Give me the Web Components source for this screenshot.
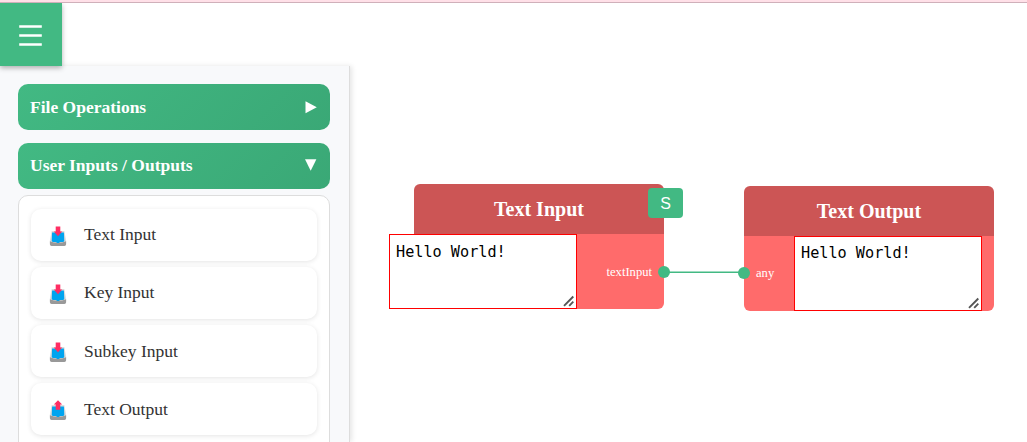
<!DOCTYPE html>
<html lang="en">
<head>
<meta charset="utf-8">
<title>Flow editor</title>
<style>
html,body{margin:0;height:100%;overflow:hidden;background:#fff;font-family:"Liberation Serif",serif}
</style>
</head>
<body>
<flow-app>
  <flow-sidebar slot="side">
    <flow-category label="File Operations"></flow-category>
    <flow-category label="User Inputs / Outputs" open>
      <flow-item dir="in">Text Input</flow-item>
      <flow-item dir="in">Key Input</flow-item>
      <flow-item dir="in">Subkey Input</flow-item>
      <flow-item dir="out">Text Output</flow-item>
    </flow-category>
  </flow-sidebar>
  <flow-link style="left:664px;top:266px"></flow-link>
  <flow-node label="Text Input" port="textInput" kind="source" style="left:414px;top:184px">Hello World!</flow-node>
  <flow-node label="Text Output" port="any" kind="sink" style="left:744px;top:186px">Hello World!</flow-node>
</flow-app>
<script>
const define = (name, render) => customElements.define(name, class extends HTMLElement {
  constructor() { super(); this.attachShadow({mode: 'open'}); }
  connectedCallback() { this.shadowRoot.innerHTML = render(this); }
});

define('flow-app', () => `<style>
:host{display:flex;flex-direction:column;height:442px;width:1027px;overflow:hidden}
.strip{height:2px;flex:none;background:#ffe0e8;border-bottom:1px solid #d0b0ba;position:relative;z-index:4}
.main{flex:1;min-height:0;display:flex;flex-direction:column}
</style><div class="strip"></div><div class="main"><menu-button></menu-button><slot name="side"></slot></div><slot></slot>`);

define('menu-button', () => `<style>
:host{display:flex;flex:none;box-sizing:border-box;width:62px;height:63px;padding:22px 0 0 19px;background:#42b983;box-shadow:0 2px 5px rgba(0,0,0,.3);position:relative;z-index:2}
svg{display:block}
</style><svg width="23" height="21" viewBox="0 0 23 21"><path fill="#fff" d="M.2 .2h22.6v2.6H.2zM.2 9.2h22.6v2.6H.2zM.2 18.2h22.6v2.6H.2z"/></svg>`);

define('flow-sidebar', () => `<style>
:host{display:flex;flex-direction:column;box-sizing:border-box;flex:1;width:350px;min-height:0;padding:18px 19px 0 18px;background:#f8f9fb;border-right:1px solid #ddd;box-shadow:2px 0 5px rgba(0,0,0,.1)}
</style><slot></slot>`);

define('flow-category', el => `<style>
:host{display:block;flex:none;width:312px;margin-bottom:13px}
.head{display:flex;align-items:center;justify-content:space-between;box-sizing:border-box;height:46px;padding:0 12px;border-radius:10px;background:linear-gradient(135deg,#42b983,#3aa876);color:#fff;font-weight:700;font-size:17.5px}
.head span{padding-bottom:${el.hasAttribute('open') ? 2 : 0}px}
.list{display:flex;flex-direction:column;gap:6px;box-sizing:border-box;margin-top:6px;padding:13px 12px 60px;border:1px solid #ddd;border-radius:10px;background:#fff}
</style><div class="head"><span>${el.getAttribute('label')}</span>
<svg width="14" height="14" viewBox="0 0 14 14"><path fill="#fff" d="${el.hasAttribute('open') ? 'M1 .3h11.4L6.7 11.7z' : 'M1.5 1.2v12L12.8 7.2z'}"/></svg></div>
${el.hasAttribute('open') ? '<div class="list"><slot></slot></div>' : ''}`);

define('flow-item', el => `<style>
:host{display:flex;align-items:center;height:52.1px;box-sizing:border-box;padding-left:18px;border-radius:10px;background:#fff;box-shadow:0 1px 5px rgba(0,0,0,.11);color:#333;font-size:17.5px}
svg{margin:3px 17px 0 0;flex:none}
span{padding-bottom:1.2px}
:host(:nth-child(n+3)) span{padding:.8px 0 0}
</style><svg width="18" height="21" viewBox="0 0 18 21">
<path fill="#dcdcdc" d="M2.7 5h12.6l1.8 9.5v3H.9v-3z"/>
<path fill="#999" d="M.9 15.3l4 1.3h8.2l4-1.3v3q0 1.7-1.7 1.7H2.6q-1.7 0-1.7-1.7z"/>
<path fill="#00a4ef" d="M3.1 6.5l-.4 8.5 1 1h3.5l.7 1h2.2l.7-1h3.5l1-1-.4-8.5z"/>
<path fill="#ff2e63" d="${el.getAttribute('dir') === 'in' ? 'M6.7.5h4.6v5h1.9L9 10.3 4.8 5.5h1.9z' : 'M9 .3l4.2 4.2h-1.9v5.2H6.7V4.5H4.8z'}"/>
</svg><span><slot></slot></span>`);

define('flow-link', () => `<style>
:host{position:absolute;width:80px;height:12px}svg{display:block}
</style><svg width="80" height="12"><path d="M0 6.25H80" stroke="#42b983" stroke-width="1.5"/></svg>`);

define('text-box', () => `<style>
:host{display:block;position:relative;box-sizing:border-box;width:188px;height:75px;padding:var(--text-top,6px) 6px 6px;border:1px solid red;background:#fff;color:#000;font:15.2px/20px "DejaVu Sans Mono",monospace}
svg{position:absolute;right:1px;bottom:1px}
</style><slot></slot><svg width="12" height="12" viewBox="0 0 12 12"><path d="M1 10.8L10.3 1.5M6.2 10.8L10.3 6.7" stroke="#555" stroke-width="1.9"/></svg>`);

define('flow-node', el => {
  const source = el.getAttribute('kind') === 'source';
  return `<style>
:host{position:absolute;display:block;width:250px;height:125px;color:#fff}
.head{display:flex;align-items:center;justify-content:center;height:50px;border-radius:6px 6px 0 0;background:#cc5555;font-weight:700;font-size:20px}
.body{display:flex;align-items:center;height:75px;border-radius:0 0 6px 6px;background:#ff6b6b;font-size:12.6px}
.source .body span{padding-top:1px}
.sink .body span{padding-bottom:1px}
.source .body{justify-content:space-between;padding-right:12px;box-sizing:border-box}
.source text-box{margin-left:-25px;--text-top:7px}
.sink .body{justify-content:space-between;padding:0 12px;box-sizing:border-box}
.dot{position:absolute;top:82px;width:12px;height:12px;border-radius:50%;background:#42b983}
.source .dot{right:-6px}.sink .dot{left:-6px;top:81px}
.badge{position:absolute;left:234px;top:4px;width:35px;height:30px;box-sizing:border-box;padding-top:2px;border-radius:4px;background:#42b983;display:flex;align-items:center;justify-content:center;font:16px "Liberation Sans",sans-serif}
</style><div class="${source ? 'source' : 'sink'}"><div class="head">${el.getAttribute('label')}</div>
<div class="body">${source ? `<text-box><slot></slot></text-box><span>${el.getAttribute('port')}</span>` : `<span>${el.getAttribute('port')}</span><text-box><slot></slot></text-box>`}</div>
<i class="dot"></i>${source ? '<div class="badge">S</div>' : ''}</div>`;
});
</script>
</body>
</html>
